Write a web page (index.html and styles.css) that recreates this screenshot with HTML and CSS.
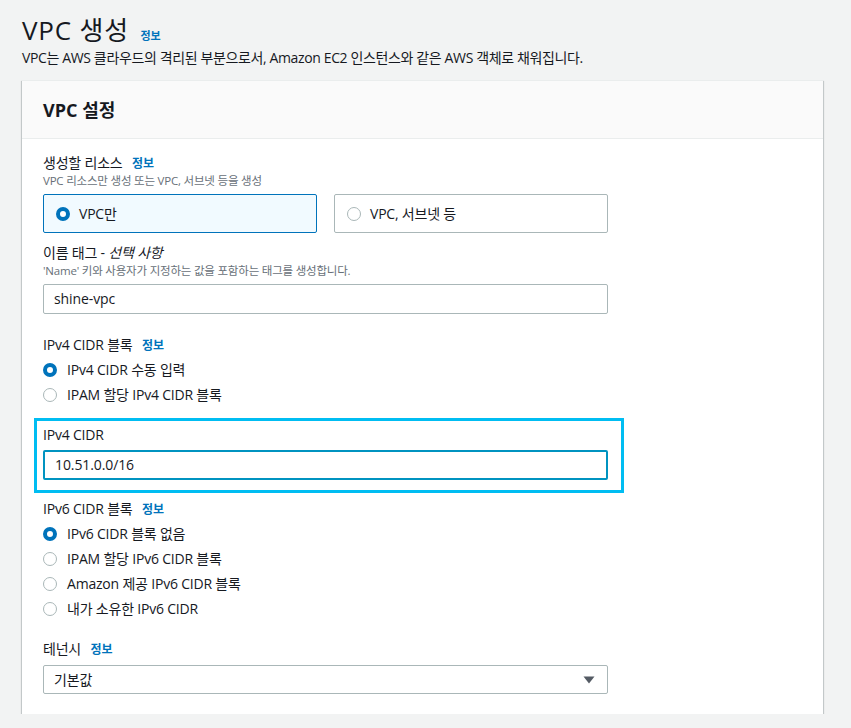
FILE: index.html
```html
<!DOCTYPE html>
<html lang="ko">
<head>
<meta charset="utf-8">
<link rel="stylesheet" href="styles.css">
</head>
<body>
<div class="page">
  <div class="page-head">
    <h1 class="title">VPC 생성 <a class="info info-title">정보</a></h1>
    <p class="page-desc">VPC는 AWS 클라우드의 격리된 부분으로서, Amazon EC2 인스턴스와 같은 AWS 객체로 채워집니다.</p>
  </div>

  <div class="card">
    <div class="card-head"><h2 class="card-title">VPC 설정</h2></div>
    <div class="card-body">

      <div class="field">
        <div class="label">생성할 리소스 <a class="info">정보</a></div>
        <div class="desc">VPC 리소스만 생성 또는 VPC, 서브넷 등을 생성</div>
        <div class="tiles">
          <div class="tile tile-on"><span class="radio radio-on"></span><span class="tile-text">VPC만</span></div>
          <div class="tile"><span class="radio"></span><span class="tile-text">VPC, 서브넷 등</span></div>
        </div>
      </div>

      <div class="field field-s">
        <div class="label">이름 태그 - <em>선택 사항</em></div>
        <div class="desc">'Name' 키와 사용자가 지정하는 값을 포함하는 태그를 생성합니다.</div>
        <div class="input">shine-vpc</div>
      </div>

      <div class="field field-l">
        <div class="label">IPv4 CIDR 블록 <a class="info">정보</a></div>
        <div class="radios">
          <div class="opt"><span class="radio radio-on"></span>IPv4 CIDR 수동 입력</div>
          <div class="opt"><span class="radio"></span>IPAM 할당 IPv4 CIDR 블록</div>
        </div>
      </div>

      <div class="highlight">
        <div class="label">IPv4 CIDR</div>
        <div class="input input-focus">10.51.0.0/16</div>
      </div>

      <div class="field field-v6">
        <div class="label">IPv6 CIDR 블록 <a class="info">정보</a></div>
        <div class="radios">
          <div class="opt"><span class="radio radio-on"></span>IPv6 CIDR 블록 없음</div>
          <div class="opt"><span class="radio"></span>IPAM 할당 IPv6 CIDR 블록</div>
          <div class="opt"><span class="radio"></span>Amazon 제공 IPv6 CIDR 블록</div>
          <div class="opt"><span class="radio"></span>내가 소유한 IPv6 CIDR</div>
        </div>
      </div>

      <div class="field field-t">
        <div class="label">테넌시 <a class="info">정보</a></div>
        <div class="input select"><span>기본값</span>
          <svg class="caret" width="12" height="8" viewBox="0 0 12 8"><path d="M0.5 0.5 H11.5 L6 7.5 Z" fill="#545b64"/></svg>
        </div>
      </div>

    </div>
  </div>
</div>
</body>
</html>
```

FILE: styles.css
```css
* { box-sizing: border-box; }
html, body { margin: 0; padding: 0; }
body {
  background: #f2f3f3;
  color: #16191f;
  font-family: "Open Sans", "Noto Sans CJK KR", sans-serif;
  font-size: 14px;
  line-height: 20px;
}
.page { padding: 12px 28px 0 22px; width: 851px; }
.title {
  margin: 0;
  font-size: 26px;
  font-weight: 400;
  line-height: 24px;
  height: 36px;
  padding-top: 6px;
  letter-spacing: 0.8px;
}
.info {
  color: #0073bb;
  font-weight: 700;
  font-size: 12px;
  line-height: 1;
  letter-spacing: 0;
  margin-left: 6px;
}
.info-title { font-size: 11px; margin-left: 4px; }
.page-desc { margin: 0; line-height: 20px; height: 20px; letter-spacing: -0.37px; }

.card {
  margin-top: 12px;
  width: 801px;
  background: #fff;
  border-top: 1px solid #eaeded;
  box-shadow: 0 1px 1px 0 rgba(0,28,36,.3), 1px 1px 1px 0 rgba(0,28,36,.15), -1px 1px 1px 0 rgba(0,28,36,.15);
}
.card-head {
  background: #fafafa;
  border-bottom: 1px solid #eaeded;
  height: 58px;
  padding: 0 21px;
  display: flex;
  align-items: center;
}
.card-title { margin: 0; font-size: 18px; font-weight: 700; line-height: 22px; }
.card-body { padding: 14px 21px 20px 21px; }

.label { line-height: 20px; height: 20px; letter-spacing: -0.2px; }
.label em { font-style: italic; }
.desc { font-size: 11.5px; line-height: 16px; height: 16px; color: #687078; letter-spacing: -0.2px; }

.field-s { margin-top: 10px; }
.field-l { margin-top: 21px; }
.field-v6 { margin-top: 6px; }
.field-t { margin-top: 20px; }

.tiles { display: flex; gap: 17px; margin-top: 5px; width: 565px; }
.tile {
  flex: 1;
  height: 39px;
  border: 1px solid #aab7b8;
  border-radius: 2px;
  display: flex;
  align-items: center;
  padding-left: 12px;
}
.tile-on { background: #f1faff; border-color: #0073bb; }
.tile-text { margin-left: 9px; letter-spacing: -0.2px; }

.radio {
  width: 14px;
  height: 14px;
  border-radius: 50%;
  border: 1px solid #aab7b8;
  background: #fff;
  display: inline-block;
  flex: none;
}
.radio-on { border: 4px solid #0073bb; }

.radios { margin-top: 5px; }
.opt { display: flex; align-items: center; height: 20px; margin-bottom: 5px; letter-spacing: -0.2px; }
.opt .radio { margin-right: 10px; }
.opt:last-child { margin-bottom: 0; }

.input {
  width: 565px;
  height: 30px;
  border: 1px solid #aab7b8;
  border-radius: 2px;
  background: #fff;
  padding: 0 10px;
  display: flex;
  align-items: center;
  margin-top: 5px;
  letter-spacing: -0.1px;
}
.input-focus { border: 2px solid #0093c0; padding-left: 10px; }
.select { justify-content: space-between; height: 29px; margin-top: 6px; padding-right: 12px; }
.caret { display: block; }

.highlight {
  width: 590px;
  margin: 13px 0 0 -9px;
  border: 3px solid #00bdf2;
  padding: 4px 13px 10px 6px;
}
.highlight .input { margin-top: 5px; }
```
